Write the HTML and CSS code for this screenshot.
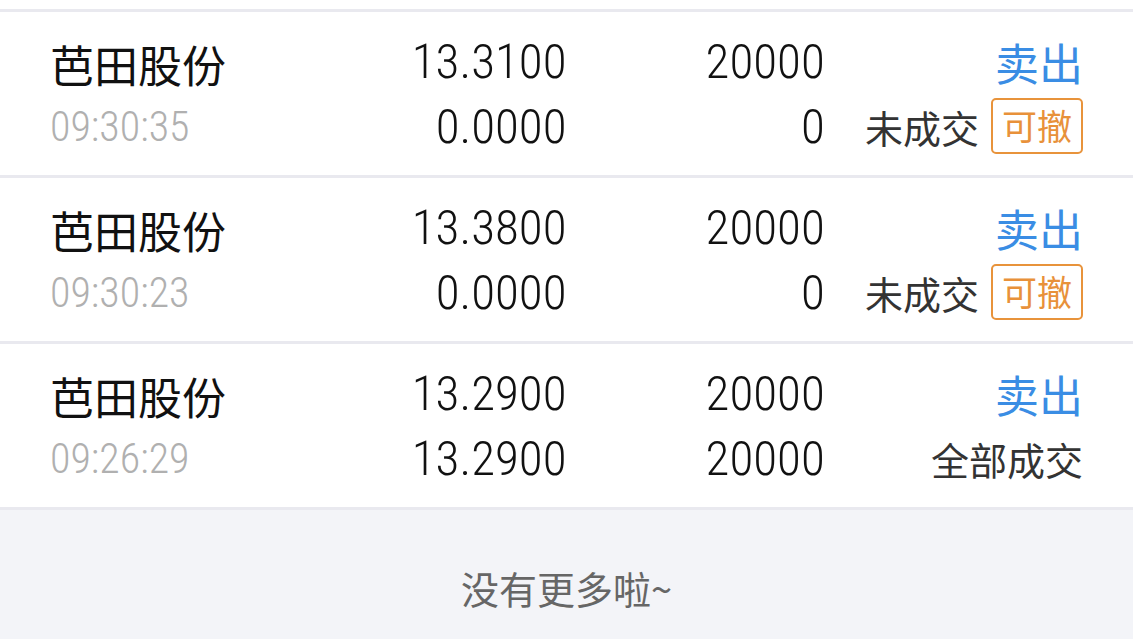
FILE: index.html
```html
<!DOCTYPE html>
<html lang="zh-CN">
<head>
<meta charset="utf-8">
<title>委托列表</title>
<link rel="stylesheet" href="styles.css">
</head>
<body>
<div class="page">
  <div class="list">
    <div class="row">
      <div class="col col-name">
        <div class="line name">芭田股份</div>
        <div class="line time num">09:30:35</div>
      </div>
      <div class="col col-r">
        <div class="line num">13.3100</div>
        <div class="line num">0.0000</div>
      </div>
      <div class="col col-r">
        <div class="line num">20000</div>
        <div class="line num">0</div>
      </div>
      <div class="col col-r">
        <div class="line side">卖出</div>
        <div class="line status"><span>未成交</span><span class="badge">可撤</span></div>
      </div>
    </div>
    <div class="row">
      <div class="col col-name">
        <div class="line name">芭田股份</div>
        <div class="line time num">09:30:23</div>
      </div>
      <div class="col col-r">
        <div class="line num">13.3800</div>
        <div class="line num">0.0000</div>
      </div>
      <div class="col col-r">
        <div class="line num">20000</div>
        <div class="line num">0</div>
      </div>
      <div class="col col-r">
        <div class="line side">卖出</div>
        <div class="line status"><span>未成交</span><span class="badge">可撤</span></div>
      </div>
    </div>
    <div class="row">
      <div class="col col-name">
        <div class="line name">芭田股份</div>
        <div class="line time num">09:26:29</div>
      </div>
      <div class="col col-r">
        <div class="line num">13.2900</div>
        <div class="line num">13.2900</div>
      </div>
      <div class="col col-r">
        <div class="line num">20000</div>
        <div class="line num">20000</div>
      </div>
      <div class="col col-r">
        <div class="line side">卖出</div>
        <div class="line status"><span>全部成交</span></div>
      </div>
    </div>
  </div>
  <div class="footer">没有更多啦~</div>
</div>
</body>
</html>
```
FILE: styles.css
```css
html, body {
  margin: 0;
  padding: 0;
  background: #ffffff;
}
body {
  font-family: "Noto Sans CJK SC", "Noto Sans", sans-serif;
  color: #111111;
}
.page {
  width: 1133px;
  height: 639px;
  overflow: hidden;
  padding-top: 9px;
  box-sizing: border-box;
}
.row {
  display: grid;
  grid-template-columns: repeat(4, 1fr);
  padding: 0 50px;
  border-top: 3px solid #e9e9ef;
  height: 163px;
  align-content: center;
}
.col {
  display: flex;
  flex-direction: column;
}
.col-r {
  align-items: flex-end;
}
.line {
  height: 65px;
  line-height: 65px;
  white-space: nowrap;
}
.name {
  font-size: 44px;
  line-height: 70px;
  color: #111111;
}
.num {
  font-family: "Roboto", "Noto Sans", sans-serif;
  font-stretch: 82%;
  font-weight: 360;
  font-size: 49px;
  color: #111111;
}
.time {
  font-size: 42px;
  font-stretch: 85%;
  font-weight: 360;
  color: #b0b0b0;
}
.side {
  font-size: 44px;
  line-height: 67px;
  color: #3a8de4;
}
.status {
  display: flex;
  align-items: center;
  gap: 12px;
  font-size: 38px;
  color: #333333;
}
.badge {
  display: inline-block;
  height: 52px;
  line-height: 50px;
  padding: 0 9px;
  border: 2px solid #e8933b;
  border-radius: 5px;
  color: #e8913a;
  font-size: 35px;
}
.footer {
  border-top: 3px solid #e9e9ef;
  background: #f3f4f8;
  height: 200px;
  text-align: center;
  font-size: 38px;
  color: #666666;
  padding-top: 52px;
  line-height: 52px;
  box-sizing: border-box;
}
```
